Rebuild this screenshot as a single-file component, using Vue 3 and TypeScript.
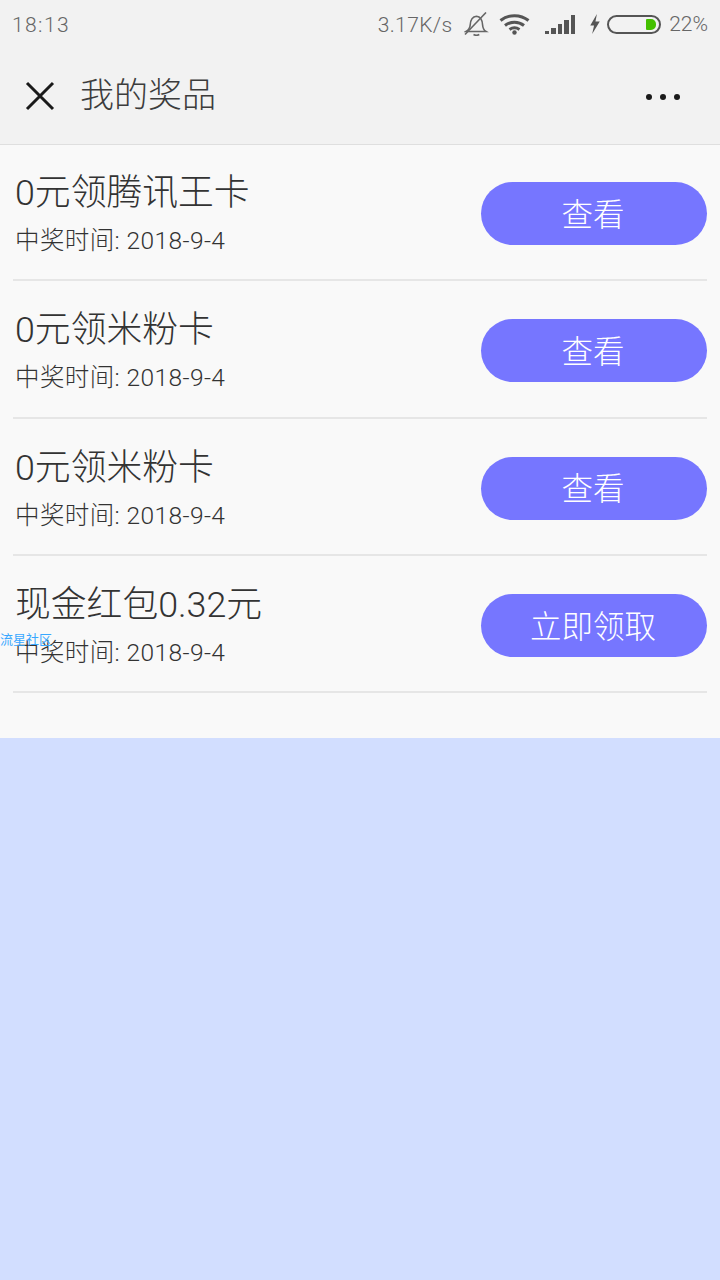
<script setup lang="ts">
interface Prize {
  title: string
  date: string
  action: string
}

const prizes: Prize[] = [
  { title: '0元领腾讯王卡', date: '2018-9-4', action: '查看' },
  { title: '0元领米粉卡', date: '2018-9-4', action: '查看' },
  { title: '0元领米粉卡', date: '2018-9-4', action: '查看' },
  { title: '现金红包0.32元', date: '2018-9-4', action: '立即领取' }
]

const bars = [3, 6, 10, 14, 19]
</script>

<template>
  <div class="page">
    <div class="status">
      <span class="time">18:13</span>
      <div class="status-right">
        <span class="speed">3.17K/s</span>
        <svg class="bell" width="25" height="24" viewBox="0 0 25 24" fill="none" stroke="#666" stroke-width="1.6">
          <path d="M2 19.500h20c-2.500-1.500-3.200-3.500-3.400-6.500-.2-3.800-.9-8.300-6.100-8.800C7 4.700 6.400 9 6.200 13c-.2 3-1.700 5-4.200 6.500z" />
          <path d="M9.500 22.500c1.800 1 4 1 5.800 0" />
          <path d="M1 22.500 22 .5" />
        </svg>
        <svg class="wifi" width="31" height="22" viewBox="0 0 31 22" fill="none" stroke="#555" stroke-width="3">
          <path d="M1.500 7.500c8-6.500 20-6.500 28 0" />
          <path d="M6 12.500c5.500-4.500 13.500-4.500 19 0" />
          <path d="M10.500 16.500c3-2 7-2 10 0" />
          <circle cx="15.500" cy="19.500" r="2.200" fill="#555" stroke="none" />
        </svg>
        <div class="signal">
          <i v-for="h in bars" :key="h" :style="{ height: h + 'px' }"></i>
        </div>
        <svg class="bolt" width="12" height="20" viewBox="0 0 12 21">
          <path d="M8 0 1 12h4l-2 9 8-13H6.500z" fill="#555" />
        </svg>
        <div class="battery"><span></span></div>
        <span class="percent">22%</span>
      </div>
    </div>

    <div class="nav">
      <svg class="close" width="30" height="30" viewBox="0 0 30 30" fill="none" stroke="#1a1a1a" stroke-width="3">
        <path d="M2 2 28 28M28 2 2 28" />
      </svg>
      <span class="nav-title">我的奖品</span>
      <div class="dots"><i></i><i></i><i></i></div>
    </div>

    <div class="list">
      <div v-for="(p, i) in prizes" :key="i" class="row">
        <div class="info">
          <div class="title">{{ p.title }}</div>
          <div class="date">中奖时间: {{ p.date }}</div>
        </div>
        <button class="btn">{{ p.action }}</button>
      </div>
      <span class="watermark">流星社区</span>
    </div>
  </div>
</template>

<style>
html,
body {
  margin: 0;
  background: #d2deff;
}
</style>

<style scoped>
.page {
  width: 720px;
  height: 1280px;
  background: #d2deff;
  font-family: Roboto, "Noto Sans CJK SC", "Liberation Sans", sans-serif;
  font-weight: 300;
  overflow: hidden;
}

.status {
  height: 48px;
  background: #f2f2f2;
  display: flex;
  align-items: center;
  justify-content: space-between;
  padding: 0 12px;
  color: #666;
  font-size: 21px;
}

.time {
  letter-spacing: 1.4px;
  padding-top: 2px;
}

.status-right {
  display: flex;
  align-items: center;
}

.speed {
  margin-right: 11px;
  letter-spacing: 0.4px;
  padding-top: 2px;
}

.bell {
  margin-right: 10px;
}

.wifi {
  margin-right: 15px;
}

.signal {
  display: flex;
  align-items: flex-end;
  gap: 2px;
  height: 20px;
  margin-right: 14px;
}

.signal i {
  width: 4.500px;
  background: #555;
}

.bolt {
  margin-right: 6px;
}

.battery {
  width: 54px;
  height: 19px;
  box-sizing: border-box;
  border: 2px solid #555;
  border-radius: 10px;
  display: flex;
  justify-content: flex-end;
  padding: 2px 3px;
  margin-right: 8px;
}

.battery span {
  width: 10px;
  background: #44c000;
  border-radius: 1px 5px 5px 1px;
}

.percent {
  font-size: 21px;
}

.nav {
  position: relative;
  z-index: 1;
  height: 96px;
  background: #f2f2f2;
  box-shadow: 0 1px 0 #dfdfdf;
  display: flex;
  align-items: center;
  padding: 0 40px 0 25px;
}

.nav-title {
  margin-left: 25px;
  padding-bottom: 8px;
  font-size: 34px;
  color: #3c3c3c;
  flex: 1;
}

.dots {
  display: flex;
  gap: 8px;
  margin-top: 2px;
}

.dots i {
  width: 6px;
  height: 6px;
  border-radius: 50%;
  background: #1a1a1a;
}

.list {
  position: relative;
  height: 594px;
  box-sizing: border-box;
  background: #f9f9f9;
  padding: 0 13px;
}

.row {
  height: 137.300px;
  box-sizing: border-box;
  padding-top: 4px;
  border-bottom: 2px solid #e6e6e6;
  display: flex;
  align-items: center;
  justify-content: space-between;
}

.info {
  padding: 6px 0 0 2px;
  color: #333;
}

.title {
  font-size: 35.800px;
  line-height: 48px;
}

.date {
  font-size: 24.500px;
  letter-spacing: 0.4px;
  line-height: 47px;
}

.btn {
  width: 226px;
  height: 63px;
  border: none;
  border-radius: 32px;
  background: #7676ff;
  color: #fff;
  font-family: inherit;
  font-weight: 300;
  font-size: 31.500px;
  padding: 0 2px 4px 0;
}

.watermark {
  position: absolute;
  left: 0;
  top: 488px;
  font-size: 13px;
  font-weight: 400;
  line-height: 16px;
  color: #39a8ff;
}
</style>
